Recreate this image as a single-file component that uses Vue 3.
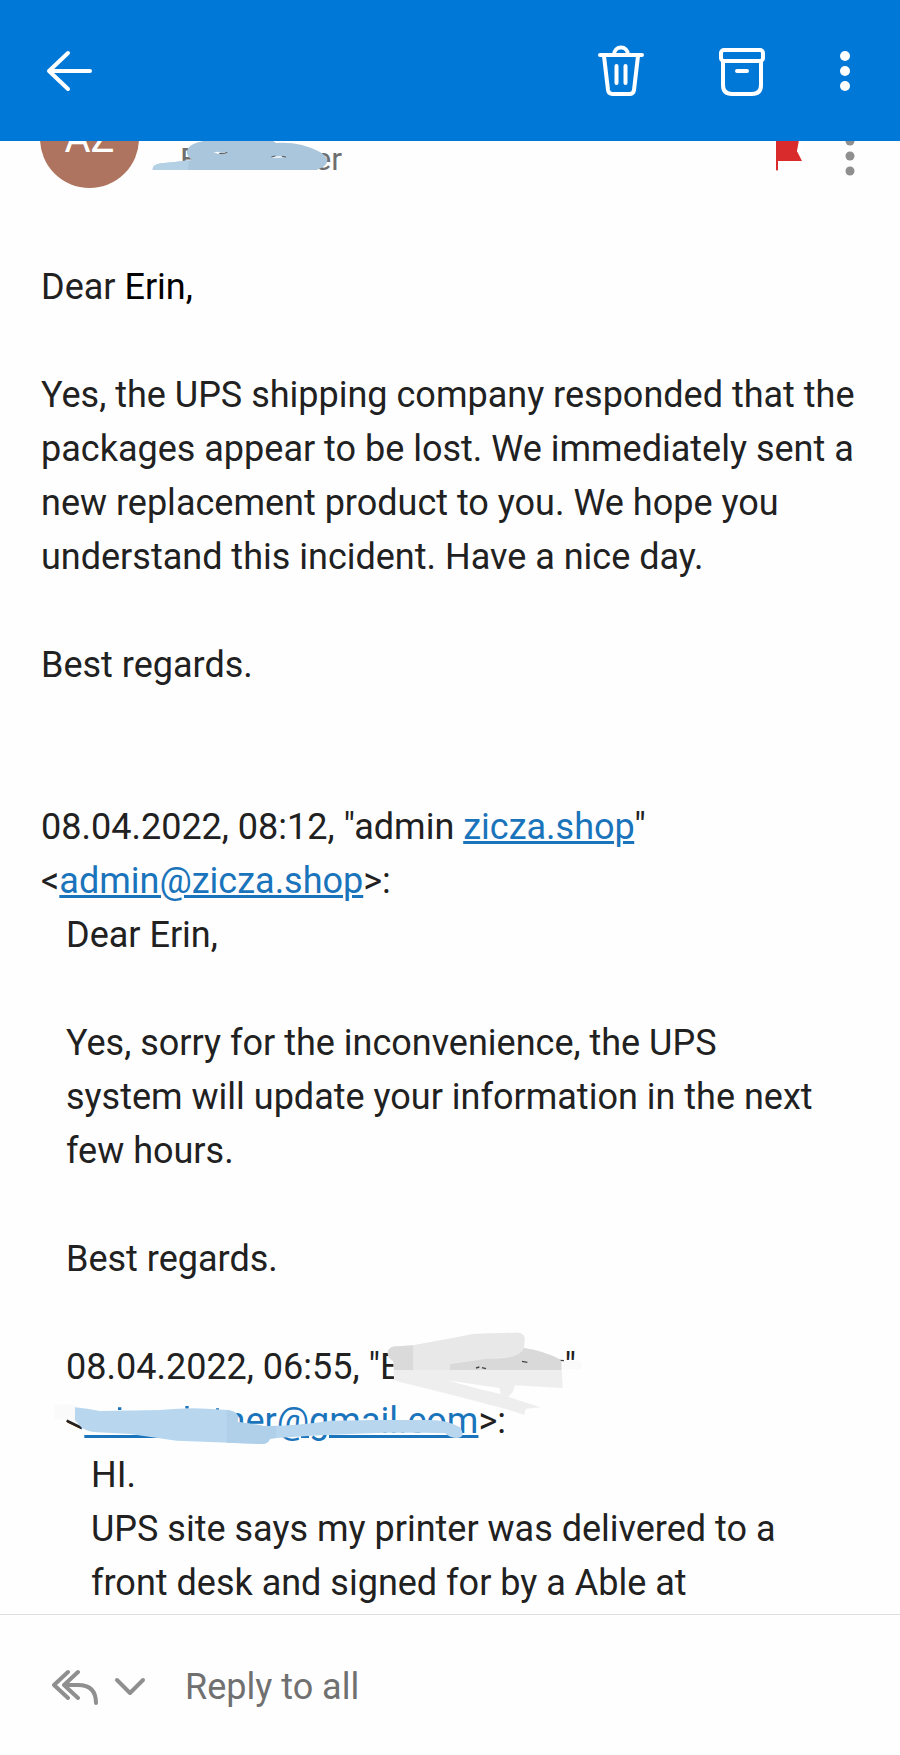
<script setup>
const hiddenPrefix = '\u00a0'.repeat(15) + '\u2009'
</script>

<template>
  <div class="app">
    <header class="toolbar">
      <button class="icon-btn" type="button" aria-label="Back">
        <svg width="48" height="48" viewBox="0 0 48 48" fill="none" stroke="#fff" stroke-width="4" stroke-linecap="round" stroke-linejoin="round">
          <path d="M44 24H4M22 6L3 24l19 18" />
        </svg>
      </button>
      <div class="actions">
        <button class="icon-btn" type="button" aria-label="Delete">
          <svg width="48" height="54" viewBox="0 0 48 54" fill="none" stroke="#fff" stroke-width="4" stroke-linecap="round" stroke-linejoin="round">
            <path d="M3 11h42M17 11c0-10 14-10 14 0M7 12l4 34q.6 4 4.500 4h17q4 0 4.500-4l4-34M19.500 22v17M28.500 22v17" />
          </svg>
        </button>
        <button class="icon-btn" type="button" aria-label="Archive">
          <svg width="48" height="54" viewBox="0 0 48 54" fill="none" stroke="#fff" stroke-width="4" stroke-linecap="round" stroke-linejoin="round">
            <rect x="3" y="6" width="42" height="11" rx="3" />
            <path d="M5 17v24q0 9 9 9h20q9 0 9-9V17M19 27h10" />
          </svg>
        </button>
        <button class="icon-btn" type="button" aria-label="More options">
          <svg width="12" height="42" viewBox="0 0 12 42" fill="#fff">
            <circle cx="6" cy="6" r="5" /><circle cx="6" cy="21" r="5" /><circle cx="6" cy="36" r="5" />
          </svg>
        </button>
      </div>
    </header>

    <main class="message">
      <div class="sender">
        <div class="avatar">AZ</div>
        <div class="recipient">
          <span>E</span><span>er</span>
          <svg class="blot" width="210" height="36" viewBox="0 0 630 108" aria-hidden="true">
            <path d="M8 90Q6 74 34 70L75 66 126 60Q100 40 118 20Q140 2 190 0L350 -2Q372 2 378 9Q450 4 510 36Q548 60 520 80L500 90Z" fill="#aac6dc" />
            <path d="M8 90Q6 74 34 70L75 66 115 61V90Z" fill="#b4d0e5" />
            <path d="M190 38l14-3 12 5 14-5-9 8-14-2z" fill="#fff" />
            <path d="M208 40q10 4 24-3" stroke="#555" stroke-width="3" fill="none" />
            <path d="M362 53q18-8 44-2l-20 2z" fill="#fff" />
            <path d="M364 51l12-3M396 49l12 2" stroke="#555" stroke-width="3" fill="none" />
          </svg>
        </div>
        <svg class="flag" width="28" height="50" viewBox="0 0 28 50" aria-label="Flagged" role="img">
          <path d="M1 2H27L22 30L27 40H3V49Q2 50 1 49Z" fill="#d92b2b" />
          <path d="M28 20L22 30L28 39Z" fill="#fff" />
        </svg>
        <button class="icon-btn" type="button" aria-label="Message options">
          <svg width="10" height="40" viewBox="0 0 10 40" fill="#8f8f8f">
            <circle cx="5" cy="5" r="4.500" /><circle cx="5" cy="20" r="4.500" /><circle cx="5" cy="35" r="4.500" />
          </svg>
        </button>
      </div>

      <article class="body">
        <p>Dear <span class="name">Erin,</span></p>
        <p>Yes, the UPS shipping company responded that the packages appear to be lost. We immediately sent a new replacement product to you. We hope you understand this incident. Have a nice day.</p>
        <p class="closing">Best regards.</p>
        <div>08.04.2022, 08:12, "admin <a href="#shop">zicza.shop</a>"<br />&lt;<a href="#admin">admin@zicza.shop</a>&gt;:</div>
        <blockquote>
          <p>Dear Erin,</p>
          <p>Yes, sorry for the inconvenience, the UPS system will update your information in the next few hours.</p>
          <p>Best regards.</p>
          <div class="quoted-sender">
            08.04.2022, 06:55, "E<span class="gap"></span>"<br />&lt;<a href="#sender">{{ hiddenPrefix }}ner@gmail.com</a>&gt;:
            <svg class="smudge" width="590" height="140" viewBox="0 0 1770 420" aria-hidden="true">
              <g transform="translate(870 0)">
                <path d="M203 95Q208 78 235 79L280 76 400 54 460 42 590 38Q612 38 614 55L612 84Q670 92 724 120L728 204 584 196Q582 218 564 230L600 242 662 262 618 266 612 284 560 268 400 226 240 186 222 180 220 124Z" fill="#eeeeee" />
                <path d="M203 95Q208 78 235 79L280 76V150H222L220 124Q200 112 203 95Z" fill="#dadada" />
                <path d="M280 76L400 54 460 42 590 38Q612 38 614 55L612 84Q600 110 540 112L390 130V150H280Z" fill="#e8e8e8" />
                <path d="M390 132L500 116Q600 118 612 84Q670 92 724 120V150H390Z" fill="#d9d9d9" />
                <path d="M380 181L538 204 542 222 480 208Z" fill="#fff" />
                <path d="M728 122h50q16 16 0 26h-50z" fill="#fafafa" />
                <path d="M468 144l10-3M486 143l12 3M606 124l16 3M722 121l10 1" stroke="#444" stroke-width="4" fill="none" />
              </g>
              <path d="M74 258Q100 248 136 256L150 322 110 300 74 296Z" fill="#fafafa" />
              <path d="M104 268h40l10 50-42-18z" fill="#fafafa" />
              <path d="M110 302L154 323" stroke="#222" stroke-width="7" />
              <path d="M264 270V262h10v8M466 266v-8h10v8M558 270v-5h9v5" fill="#1a74bb" />
              <path d="M135 262Q170 266 210 273L390 270Q480 262 530 266L596 270Q632 278 622 306Q670 312 700 318Q800 318 900 302L1030 300 1190 300Q1250 298 1290 322Q1310 354 1278 354Q1256 352 1246 340L1180 338 1060 338 870 346 740 354 720 356Q714 374 690 372L440 362 300 342 190 336Q160 330 150 318L135 300Z" fill="#b8d7ef" />
              <path d="M590 271Q634 274 622 306Q670 312 700 318H740L738 354 720 356Q714 374 690 372L590 368Z" fill="#b0d0ea" />
            </svg>
          </div>
          <blockquote>HI.<br />UPS site says my printer was delivered to a front desk and signed for by a Able at</blockquote>
        </blockquote>
      </article>
    </main>

    <footer class="reply-bar">
      <button class="icon-btn" type="button" aria-label="Reply to all">
        <svg width="46" height="36" viewBox="0 0 46 36" fill="none" stroke="#8f8f8f" stroke-width="4" stroke-linecap="round" stroke-linejoin="round">
          <path d="M16 3L2 16l14 13M26 3L12 16l14 13M12 16h14Q44 16 44 34" />
        </svg>
      </button>
      <button class="icon-btn chevron" type="button" aria-label="Reply options">
        <svg width="32" height="20" viewBox="0 0 32 20" fill="none" stroke="#8f8f8f" stroke-width="4" stroke-linecap="round" stroke-linejoin="round">
          <path d="M3 3l13 13L29 3" />
        </svg>
      </button>
      <button class="reply" type="button">Reply to all</button>
    </footer>
  </div>
</template>

<style>
body {
  margin: 0;
  background: #fefefe;
}
</style>

<style scoped>
.app {
  display: flex;
  flex-direction: column;
  height: 100vh;
  font-family: Roboto, "Liberation Sans", sans-serif;
  font-size: 36px;
  line-height: 54px;
  color: #212121;
}
button {
  padding: 0;
  border: 0;
  background: none;
  font: inherit;
  color: inherit;
}
.icon-btn {
  display: flex;
  align-items: center;
}
.toolbar {
  flex: none;
  display: flex;
  justify-content: space-between;
  align-items: center;
  height: 141px;
  padding: 0 49px 0 46px;
  box-sizing: border-box;
  background: #0078d7;
}
.actions {
  display: flex;
  align-items: center;
  gap: 73px;
}
.message {
  flex: 1;
  min-height: 0;
  overflow: hidden;
}
/* The sender row is scrolled partly under the toolbar. */
.sender {
  display: flex;
  align-items: flex-end;
  height: 100px;
  margin-top: -53px;
  padding: 0 45px 0 40px;
}
.avatar {
  width: 99px;
  height: 99px;
  border-radius: 50%;
  background: #ae745f;
  color: #fff;
  font-size: 40px;
  line-height: 99px;
  text-align: center;
}
.recipient {
  position: relative;
  display: flex;
  justify-content: space-between;
  width: 162px;
  height: 40px;
  margin: 0 auto 18px 41px;
  font-size: 32px;
  line-height: 58px;
  color: #6e6e6e;
  clip-path: inset(0 0 0 -40px);
}
.blot {
  position: absolute;
  left: -30px;
  bottom: -6px;
}
.flag {
  margin: 0 42px 17px 0;
}
.sender .icon-btn {
  margin-bottom: 12px;
}
.body {
  padding: 72px 41px 0;
}
p {
  margin: 0 0 54px;
}
.closing {
  margin-bottom: 108px;
}
.name {
  color: #000;
}
a {
  color: #1a74bb;
  text-decoration: underline;
  text-decoration-thickness: 3px;
}
blockquote {
  margin: 0 25px;
}
.quoted-sender {
  position: relative;
}
.gap {
  display: inline-block;
  width: 164px;
}
.smudge {
  position: absolute;
  left: -36px;
  top: -20px;
  pointer-events: none;
}
.reply-bar {
  flex: none;
  display: flex;
  align-items: center;
  height: 141px;
  padding: 4px 52px 0;
  box-sizing: border-box;
  border-top: 1px solid #dedede;
}
.chevron {
  margin: 0 39px 0 16px;
}
.reply {
  color: #707070;
}
</style>
